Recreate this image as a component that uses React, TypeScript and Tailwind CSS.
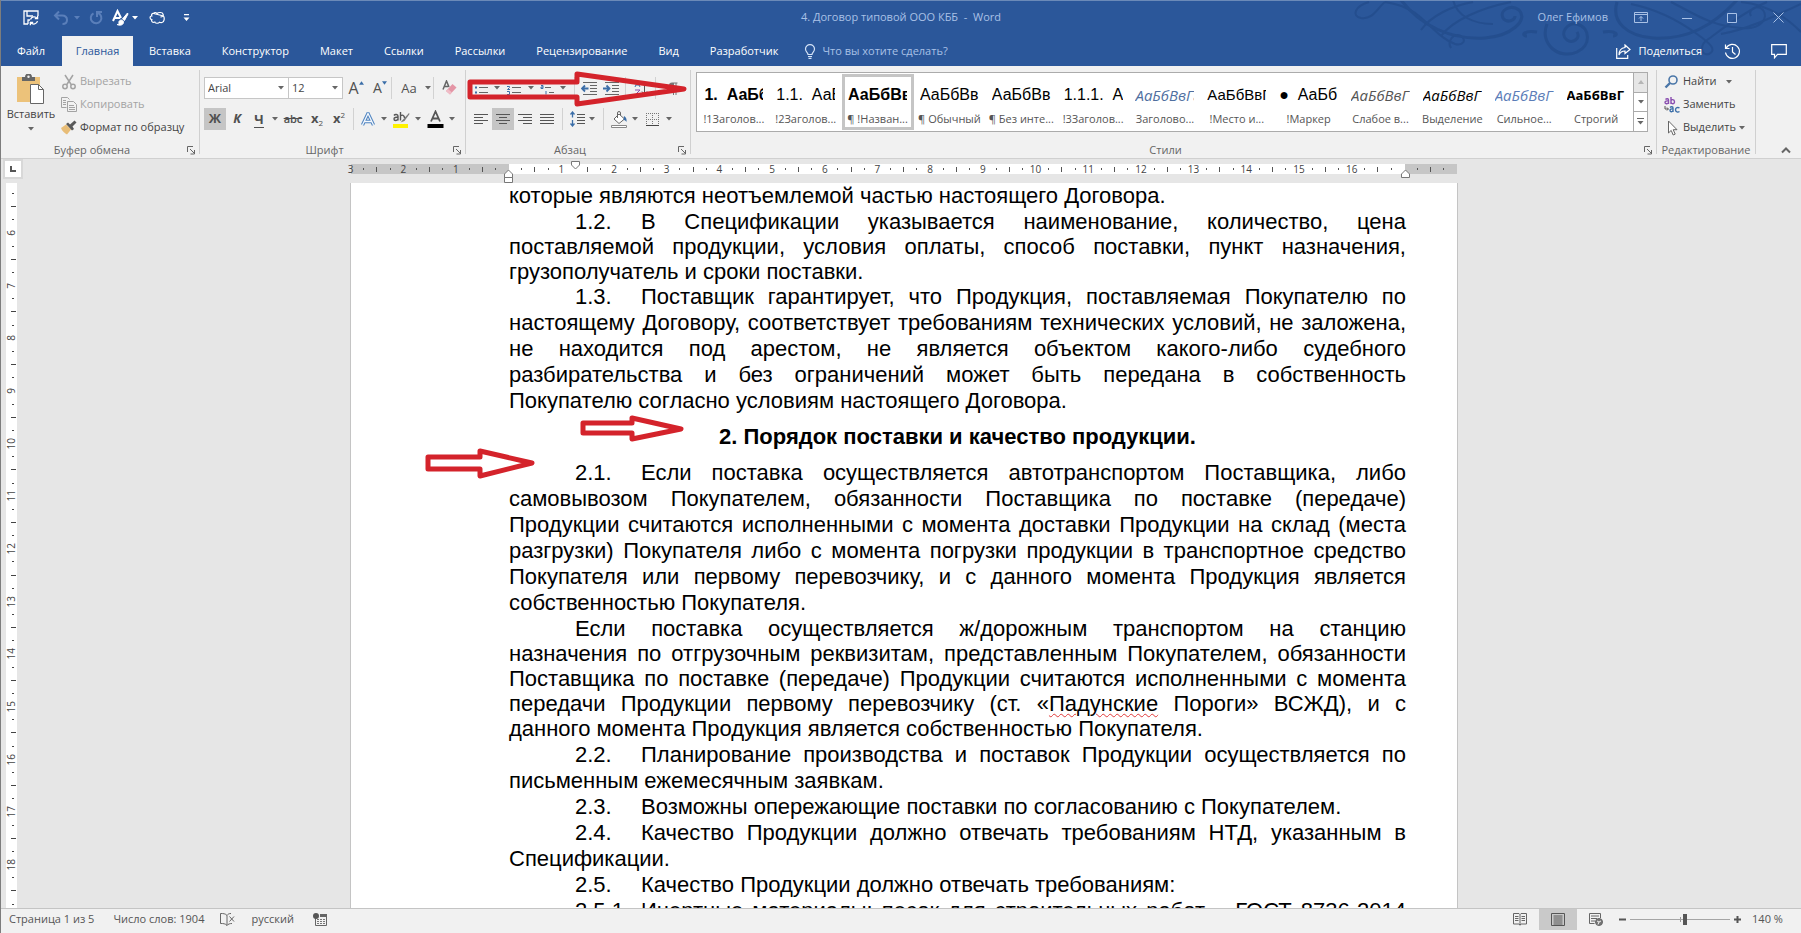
import React from "react";

type Kids = { children?: React.ReactNode };

const UI = "font-['Open_Sans','Noto_Sans',sans-serif]";

/* ---------- small shared parts ---------- */

function Caret({ className = "w-[10px]", label }: { className?: string; label: string }) {
  return (
    <button aria-label={label} className={`flex h-[22px] shrink-0 items-center justify-center text-[#666] ${className}`}>
      <svg width="6" height="4" viewBox="0 0 6 4">
        <path d="M0 0h6L3 3.6z" fill="currentColor" />
      </svg>
    </button>
  );
}

function Tool({ label, w = "w-[22px]", active = false, children }: Kids & { label: string; w?: string; active?: boolean }) {
  return (
    <button
      aria-label={label}
      className={`flex h-[22px] shrink-0 items-center justify-center text-[#505050] ${w} ${active ? "bg-[#c5c5c5]" : ""}`}
    >
      {children}
    </button>
  );
}

function Sep({ className = "" }: { className?: string }) {
  return <span className={`h-[22px] w-px shrink-0 bg-[#d2d2d2] ${className}`} />;
}

function Launcher({ label }: { label: string }) {
  return (
    <button aria-label={label} className="absolute right-[3px] bottom-[3px] text-[#666]">
      <svg width="9" height="9" viewBox="0 0 9 9" fill="none" stroke="currentColor">
        <path d="M.5 6V.5H6M3 3l4 4M7.5 4v4h-4" />
      </svg>
    </button>
  );
}

function Group({ title, className = "", launcher = true, children }: Kids & { title: string; className?: string; launcher?: boolean }) {
  return (
    <section aria-label={title} className={`relative flex flex-col ${className}`}>
      <div className="flex-1">{children}</div>
      <div className={`h-4 text-center text-[11px] leading-4 text-[#666] ${launcher ? "pr-4" : ""}`}>{title}</div>
      {launcher && <Launcher label={`Параметры: ${title}`} />}
    </section>
  );
}

function GroupLine() {
  return <span className="my-1 w-px shrink-0 bg-[#d0d0d0]" />;
}

function RedArrow({ className, w, h, points, stroke }: { className: string; w: number; h: number; points: string; stroke: number }) {
  return (
    <svg className={`pointer-events-none absolute z-20 ${className}`} width={w} height={h} viewBox={`0 0 ${w} ${h}`} aria-hidden>
      <polygon points={points} fill="none" stroke="#d4232b" strokeWidth={stroke} strokeLinejoin="round" />
    </svg>
  );
}

/* ---------- title bar ---------- */

function Swirls() {
  return (
    <svg className="pointer-events-none absolute top-0 right-0 opacity-80" width="460" height="60" viewBox="0 0 460 60" fill="none" stroke="#234c8c" strokeWidth="2" aria-hidden>
      <path d="M28 2c-14 4-18 14-8 16 12 2 16-10 24-16M44 2c10 2 22 4 34 14 14 12 24 24 36 28 8 2 12-4 6-8-8-4-14 6-10 12" />
      <path d="M60 0c20 26 50 40 84 38 26-2 44-18 34-28-8-6-20 0-16 8 4 6 12 2 12-2" strokeWidth="3" />
      <path d="M80 30c10-14 30-24 52-28M100 36C112 20 140 8 170 2M112 0c4 16 20 24 40 24" />
      <path d="M196 32c-14-2-16 4-10 4M206 24c-8 20 12 36 30 28 14-6 14-24 0-28-10-2-18 10-10 16 6 4 14-2 10-8" strokeWidth="3" />
      <path d="M262 32c14-2 16 4 10 4M276 2c-6 20 10 34 36 36 34 2 60-12 84-38" strokeWidth="3" />
      <path d="M290 4c20 4 44 14 66 30 14 10 20 16 12 20-8 2-10-8-2-14 14-10 36-28 60-38M330 2c24 12 40 24 70 26 20 2 28-10 22-18-6-6-16 0-12 6" />
      <path d="M400 2c24 2 44 14 60 30M380 34c24-4 50-16 80-30" />
    </svg>
  );
}

function QuickAccess() {
  return (
    <div className="flex items-center pl-[22px] text-white">
      <button aria-label="Сохранить" className="w-[16px]">
        <svg width="16" height="16" viewBox="0 0 16 16" fill="none" stroke="currentColor" strokeWidth="1.3">
          <path d="M5 14H1V1h14v5M4 1v5h6M5 14v-4h2" />
          <path d="M7.500 9.500A3.800 3.800 0 0 1 14 8.200M14.600 5.800v2.800h-2.800M14.500 11.200A3.800 3.800 0 0 1 8 12.800M7.400 15.200v-2.800h2.800" />
        </svg>
      </button>
      <button aria-label="Отменить" className="ml-[14px] w-[16px] text-[#5a7fba]">
        <svg width="16" height="16" viewBox="0 0 16 16" fill="none" stroke="currentColor" strokeWidth="2">
          <path d="M6 1.500 2 5.500l4 4M2.500 5.500H9c3.500 0 5 2 5 4.500S12 14 9.500 14" />
        </svg>
      </button>
      <Chevron className="ml-[5px] text-[#5a7fba]" />
      <button aria-label="Повторить" className="ml-[8px] w-[16px] text-[#5a7fba]">
        <svg width="16" height="16" viewBox="0 0 16 16" fill="none" stroke="currentColor" strokeWidth="2">
          <path d="M5.500 3.300A5.300 5.300 0 1 0 10 3M9 7V2h5" />
        </svg>
      </button>
      <button aria-label="Стили шрифта" className="ml-[7px] w-[18px]">
        <svg width="18" height="18" viewBox="0 0 18 18" fill="none" stroke="currentColor">
          <path d="M2 12 6.500 2 10 9M3.500 9H9" strokeWidth="2" />
          <path d="m16.500 4-5 6 2 1.500L17 5z" fill="currentColor" />
          <path d="M10.500 11c-2 0-3 1.500-2.500 3 .3 1-1 1.500-2 1.500 3 1.500 7 .5 6.500-3z" fill="currentColor" />
        </svg>
      </button>
      <Chevron className="ml-[3px]" />
      <button aria-label="Выделение фигуры" className="ml-[11px] w-[16px]">
        <svg width="16" height="14" viewBox="0 0 16 14" fill="none" stroke="currentColor" strokeWidth="1.200">
          <path d="M4.500 2.500C5.500 1 7.500 1.300 8 2.500c1.500-1.500 5.500-1.300 6 .5.700 2-1 3-2.500 2.800M14.500 5c1.300 2 .8 6-1.500 6.500-1.500.3-2.500-.3-2.500-.3C9.500 12.800 6 12.500 5.800 11 3.500 12 2.200 10.500 2.800 8.500.500 8.300.500 5 2.800 5 2.200 3.500 3 2.300 4.500 2.500z" />
        </svg>
      </button>
      <button aria-label="Настройка панели" className="ml-[18px]">
        <svg width="7" height="8" viewBox="0 0 7 8" fill="currentColor">
          <path d="M1 0h5v1.200H1zM.5 3.500h6l-3 3.500z" />
        </svg>
      </button>
    </div>
  );
}

function Chevron({ className = "" }: { className?: string }) {
  return (
    <svg className={`shrink-0 ${className}`} width="6" height="4" viewBox="0 0 6 4" aria-hidden>
      <path d="M0 0h6L3 3.600z" fill="currentColor" />
    </svg>
  );
}

function TitleBar() {
  return (
    <div className="relative grid h-9 grid-cols-[1fr_auto_1fr] items-center border-t border-[#6b8ab8] pb-[2px]">
      <QuickAccess />
      <h1 className="text-[11px] text-[#a9c1e6]">4. Договор типовой ООО КББ &nbsp;-&nbsp; Word</h1>
      <div className="flex items-center justify-end text-[#a9c1e6]">
        <button className="text-[11px]">Олег Ефимов</button>
        <button aria-label="Параметры ленты" className="ml-[26px] w-[14px]">
          <svg width="14" height="12" viewBox="0 0 14 12" fill="none" stroke="currentColor">
            <path d="M.5.5h13v10H.5zM.5 2.500h13M7 9V4.500M5 6.500l2-2 2 2" />
          </svg>
        </button>
        <button aria-label="Свернуть" className="ml-[34px] w-[10px]">
          <svg width="10" height="10" viewBox="0 0 10 10" stroke="currentColor"><path d="M0 5.500h10" /></svg>
        </button>
        <button aria-label="Развернуть" className="ml-[35px] w-[10px]">
          <svg width="10" height="10" viewBox="0 0 10 10" fill="none" stroke="currentColor"><path d="M.5.5h9v9h-9z" /></svg>
        </button>
        <button aria-label="Закрыть" className="mr-[17px] ml-[36px] w-[11px]">
          <svg width="11" height="11" viewBox="0 0 11 11" fill="none" stroke="currentColor"><path d="m.5.500 10 10M10.500.500l-10 10" /></svg>
        </button>
      </div>
    </div>
  );
}

const TABS = ["Вставка", "Конструктор", "Макет", "Ссылки", "Рассылки", "Рецензирование", "Вид", "Разработчик"];

function TabRow() {
  return (
    <nav className="relative flex h-[30px] items-stretch gap-px text-[11px] text-white">
      <button className="w-[60px]">Файл</button>
      <button className="w-[71px] bg-[#f1f1f1] text-[#2b579a]">Главная</button>
      {TABS.map((t) => (
        <button key={t} className="px-[15px]">{t}</button>
      ))}
      <label className="ml-[10px] flex items-center gap-[6px]">
        <svg width="12" height="15" viewBox="0 0 12 15" fill="none" stroke="#d5e3f7" strokeWidth="1.200">
          <path d="M4 10.500C4 8.500 1.500 8 1.500 5A4.300 4.300 0 0 1 6 .7 4.300 4.300 0 0 1 10.500 5C10.500 8 8 8.500 8 10.500zM4 12.500h4M4.500 14.300h3" />
        </svg>
        <input aria-label="Что вы хотите сделать?" placeholder="Что вы хотите сделать?" className="w-40 bg-transparent placeholder:text-[#a9c1e6] placeholder:opacity-100" />
      </label>
      <div className="ml-auto flex items-center">
        <button className="flex items-center gap-[8px]">
          <svg width="15" height="15" viewBox="0 0 15 15" fill="none" stroke="currentColor" strokeWidth="1.200">
            <path d="M.7 4v10.300h11V11M9 1l5 4.500-5 4V7C6 7 4 8.500 3 11c0-4 2-7 6-7.500z" />
          </svg>
          Поделиться
        </button>
        <button aria-label="Журнал" className="ml-[22px]">
          <svg width="17" height="17" viewBox="0 0 17 17" fill="none" stroke="currentColor" strokeWidth="1.200">
            <path d="M2.300 5A7 7 0 1 1 1.500 9.500M1.500 1.500V5.500h4M8.500 4v5l3 2.500" />
          </svg>
        </button>
        <button aria-label="Примечания" className="mr-[14px] ml-[30px]">
          <svg width="16" height="15" viewBox="0 0 16 15" fill="none" stroke="currentColor" strokeWidth="1.200">
            <path d="M.7.700h14.600v9.600H6.500L3.500 13.800v-3.500H.7z" />
          </svg>
        </button>
      </div>
    </nav>
  );
}

/* ---------- ribbon ---------- */

function ClipboardGroup() {
  return (
    <Group title="Буфер обмена" className="w-[198px]">
      <div className="flex pt-1">
        <button className="flex w-[60px] flex-col items-center pt-1 text-[11px] text-[#444]">
          <svg width="30" height="30" viewBox="0 0 30 30">
            <path d="M1 3h23v25H1z" fill="#ecc27a" />
            <path d="M6 7V3h3a3.500 3.500 0 0 1 7 0h3v4z" fill="#666" />
            <circle cx="12.500" cy="2.800" r="1.200" fill="#f1f1f1" />
            <path d="M14.500 10.500h8l5 5v14h-13z" fill="#fff" stroke="#666" />
            <path d="M22.500 10.500v5h5" fill="none" stroke="#666" />
          </svg>
          <span className="mt-[2px] leading-4">Вставить</span>
          <Chevron className="mt-[5px] text-[#666]" />
        </button>
        <div className="flex flex-col text-[11px]">
          <button disabled className="flex h-[23px] items-center gap-[3px] text-[#a3a3a3]">
            <svg width="16" height="16" viewBox="0 0 16 16" fill="none" stroke="currentColor" strokeWidth="1.500">
              <path d="M4 1l6.500 10M12 1 5.500 11" />
              <circle cx="4" cy="12.500" r="2.200" /><circle cx="12" cy="12.500" r="2.200" />
            </svg>
            Вырезать
          </button>
          <button disabled className="flex h-[23px] items-center gap-[3px] text-[#a3a3a3]">
            <svg width="16" height="15" viewBox="0 0 16 15" fill="none" stroke="currentColor">
              <path d="M5.500 10.500h-5V.500h6l2 2M6.500 4.500h6l3 3v7h-9zM2 3.500h3M2 5.500h3M2 7.500h3M8 8.500h5M8 10.500h6M8 12.500h6" />
            </svg>
            Копировать
          </button>
          <button className="flex h-[23px] items-center gap-[3px] text-[#444]">
            <svg width="16" height="15" viewBox="0 0 16 15">
              <path d="M0 8l5-3.500 5 5L6 14.500C4 13.500 1 11 0 8z" fill="#e8bd77" />
              <path d="m5 4 2-1.500L9 4.500 13.500.500l2 2L11.500 6.500 13 9l-2 1.500z" fill="#595959" />
            </svg>
            Формат по образцу
          </button>
        </div>
      </div>
    </Group>
  );
}

function FontGroup() {
  const field = "h-[22px] w-full appearance-none border border-[#c6c6c6] bg-white px-[3px] text-[11px] text-[#444]";
  return (
    <Group title="Шрифт" className="w-[265px]">
      <div className="flex flex-col gap-[9px] pt-[11px] pl-1">
        <div className="flex h-[22px] items-center">
          <label className="relative flex w-[85px]">
            <select aria-label="Шрифт" className={field} defaultValue="Arial"><option>Arial</option></select>
            <Chevron className="absolute top-[9px] right-[5px] text-[#666]" />
          </label>
          <label className="relative -ml-px flex w-[55px]">
            <select aria-label="Размер шрифта" className={field} defaultValue="12"><option>12</option></select>
            <Chevron className="absolute top-[9px] right-[5px] text-[#666]" />
          </label>
          <Tool label="Увеличить размер" w="w-[26px]">
            <span className="text-base leading-4">A</span>
            <svg className="mb-[10px]" width="5" height="4" viewBox="0 0 6 4"><path d="M0 4h6L3 0z" fill="#3b6ea8" /></svg>
          </Tool>
          <Tool label="Уменьшить размер" w="w-[22px]">
            <span className="text-sm leading-4">A</span>
            <svg className="mb-[10px]" width="5" height="4" viewBox="0 0 6 4"><path d="M0 0h6L3 4z" fill="#3b6ea8" /></svg>
          </Tool>
          <Sep />
          <Tool label="Регистр" w="w-[30px]"><span className="pl-[4px] text-[13px] leading-4">Aa</span></Tool>
          <Caret label="Меню регистра" className="w-[11px]" />
          <Sep />
          <Tool label="Очистить формат" w="w-[30px]">
            <svg width="15" height="16" viewBox="0 0 15 16">
              <path d="M1 9.500 4.500 1 7 7M2.500 6.500h4" fill="none" stroke="#666" strokeWidth="1.500" />
              <path d="m4 11 6.500-7 4 3.500L8 14.500z" fill="#e495a5" />
              <path d="m4 11 2-2 4 3.500-2 2z" fill="#f0bcc6" />
            </svg>
          </Tool>
        </div>
        <div className="flex items-center">
          <Tool label="Полужирный" active><b className="text-[13px]">Ж</b></Tool>
          <Tool label="Курсив"><b className="text-[13px] italic">К</b></Tool>
          <Tool label="Подчёркнутый"><b className="border-b border-current text-[13px] leading-4">Ч</b></Tool>
          <Caret label="Вид подчёркивания" />
          <Tool label="Зачёркнутый" w="w-[26px]"><b className="text-[11px] font-semibold line-through">abc</b></Tool>
          <Tool label="Подстрочный" w="w-[22px]"><b className="text-[13px]">x</b><span className="pt-[8px] text-[8px] leading-3">2</span></Tool>
          <Tool label="Надстрочный" w="w-[22px]"><b className="text-[13px]">x</b><span className="pb-[8px] text-[8px] leading-3">2</span></Tool>
          <Sep className="mx-[3px]" />
          <Tool label="Текстовые эффекты">
            <svg width="14" height="14" viewBox="0 0 14 14" fill="none">
              <path d="M1.500 13 7 1.500 12.500 13M3.500 9.500h7" stroke="#4f84c0" strokeWidth="3.400" />
              <path d="M1.500 13 7 1.500 12.500 13M3.500 9.500h7" stroke="#f4f8fd" strokeWidth="1.300" />
            </svg>
          </Tool>
          <Caret label="Виды эффектов" />
          <Tool label="Цвет выделения" w="w-[24px]">
            <svg width="18" height="18" viewBox="0 0 18 18">
              <path d="M1 14h15v4H1z" fill="#fff200" />
              <path d="M2 5.500c1-1.500 4-1.200 4 .5v4.500M6 7.500c-2-.5-4 0-4 1.500 0 2 3 2 4 0M8.500 2v8.500M8.500 6c1.500-1.500 4-1 4 2" fill="none" stroke="#555" strokeWidth="1.400" />
              <path d="m17 3-5.500 6-3 3.500 4-1.500L17.500 4z" fill="#7a7a7a" />
            </svg>
          </Tool>
          <Caret label="Палитра выделения" />
          <Tool label="Цвет текста" w="w-[24px]">
            <svg width="17" height="18" viewBox="0 0 17 18">
              <path d="M4 11.500 8.500 1.500 13 11.500M5.500 8.500h6" fill="none" stroke="#555" strokeWidth="1.800" />
              <path d="M.5 14h16v4H.5z" fill="#000" />
            </svg>
          </Tool>
          <Caret label="Палитра текста" />
        </div>
      </div>
    </Group>
  );
}

function Lines({ rows }: { rows: string }) {
  return (
    <svg width="15" height="13" viewBox="0 0 15 13" fill="none" stroke="#555"><path d={rows} /></svg>
  );
}

function ParagraphGroup() {
  return (
    <Group title="Абзац" className="w-[224px]">
      <div className="flex flex-col gap-[9px] pt-[11px] pl-1">
        <div className="flex items-center">
          <Tool label="Маркеры">
            <svg width="14" height="14" viewBox="0 0 14 14" fill="none" stroke="#666"><path d="M5 6.500h9M5 11.500h9" /><path d="M1 6.500h2M1 11.500h2" stroke="#3b6ea8" strokeWidth="2" /></svg>
          </Tool>
          <Caret label="Виды маркеров" />
          <Tool label="Нумерация" w="w-[24px]">
            <svg width="14" height="14" viewBox="0 0 14 14" fill="none" stroke="#666"><path d="M5 6.500h9M5 11.500h9" /><path d="M0 5.500h2.500v1L.5 8.500h2.500M0 10.500h2.500v3H0" stroke="#3b6ea8" /></svg>
          </Tool>
          <Caret label="Виды нумерации" />
          <Tool label="Многоуровневый список" w="w-[22px]">
            <svg width="14" height="14" viewBox="0 0 14 14" fill="none" stroke="#666"><path d="M5 6.500h6M9 11.500h5" /><path d="M1 4.500h2v3H1v-1.500h2M6 10v3.500" stroke="#3b6ea8" /></svg>
          </Tool>
          <Caret label="Виды списков" />
          <Sep className="mr-[3px] ml-[6px]" />
          <Tool label="Уменьшить отступ">
            <svg width="16" height="13" viewBox="0 0 16 13" fill="none" stroke="#666"><path d="M2 .500h14M9 3.500h7M9 6.500h7M9 9.500h7M2 12.500h14" /><path d="M7.500 6.500H1M4 3.500l-3 3 3 3" stroke="#3b6ea8" strokeWidth="1.800" /></svg>
          </Tool>
          <Tool label="Увеличить отступ">
            <svg width="16" height="13" viewBox="0 0 16 13" fill="none" stroke="#666"><path d="M2 .500h14M9 3.500h7M9 6.500h7M9 9.500h7M2 12.500h14" /><path d="M0 6.500h6.500M3.500 3.500l3 3-3 3" stroke="#3b6ea8" strokeWidth="1.800" /></svg>
          </Tool>
          <Sep className="mx-[3px]" />
          <Tool label="Сортировка" w="w-[24px]">
            <svg width="14" height="15" viewBox="0 0 14 15" fill="none"><path d="M1 6 3.500.500 6 6M2 4h3" stroke="#3b6ea8" /><path d="M1 9h5l-5 5h5" stroke="#8a4fb0" /><path d="M10.500 0v13M8 10.500l2.500 3 2.500-3" stroke="#555" /></svg>
          </Tool>
          <Sep className="mr-[6px] ml-[2px]" />
          <Tool label="Знаки абзаца">
            <svg width="10" height="13" viewBox="0 0 10 13"><path d="M9.500.500H4a3 3 0 0 0 0 6h1V13h1V1.500h1.500V13h1V1.500h1z" fill="#777" /></svg>
          </Tool>
        </div>
        <div className="flex items-center">
          <Tool label="По левому краю"><Lines rows="M0 1.500h14M0 4.500h9M0 7.500h14M0 10.500h9" /></Tool>
          <Tool label="По центру" active><Lines rows="M0 1.500h14M3 4.500h8M0 7.500h14M3 10.500h8" /></Tool>
          <Tool label="По правому краю"><Lines rows="M0 1.500h14M5 4.500h9M0 7.500h14M5 10.500h9" /></Tool>
          <Tool label="По ширине"><Lines rows="M0 1.500h14M0 4.500h14M0 7.500h14M0 10.500h14" /></Tool>
          <Sep className="mx-[4px]" />
          <Tool label="Интервал" w="w-[20px]">
            <svg width="15" height="16" viewBox="0 0 15 16" fill="none" stroke="#555"><path d="M7 3.500h8M7 6.500h8M7 9.500h8M7 12.500h8" /><path d="M2.500 1v5.500M2.500 9v6M.500 3.500l2-2.500 2 2.500M.500 12.500l2 2.500 2-2.500" stroke="#3b6ea8" strokeWidth="1.300" /></svg>
          </Tool>
          <Caret label="Виды интервалов" />
          <Sep className="mr-[4px] ml-[6px]" />
          <Tool label="Заливка">
            <svg width="17" height="17" viewBox="0 0 17 17" fill="none" stroke="#666"><path d="m3 8 5-5 5.500 5L8 12.500z" fill="#fff" /><path d="M6.500 7V2a1.500 1.500 0 0 1 3 0v2" /><path d="M13 5c2 1 3 3 2.500 6-1-1.500-2-2-3-2z" fill="#3b6ea8" stroke="none" /><path d="M.5 14.500h15v2H.5z" fill="#fff" stroke="#888" /></svg>
          </Tool>
          <Caret label="Палитра заливки" />
          <Tool label="Границы" w="w-[24px]">
            <svg width="13" height="13" viewBox="0 0 13 13" fill="none" stroke="#777"><path d="M.5 0v12M12.500 0v12M6.500 0v12M0 .500h13M0 6.500h13" strokeDasharray="1 1" /><path d="M0 12.500h13" stroke="#444" /></svg>
          </Tool>
          <Caret label="Виды границ" />
        </div>
      </div>
      <RedArrow className="top-[3px] left-0" w={224} h={40} stroke={5} points="4,13 111,13 111,5 218,20 111,35 111,28 4,28" />
    </Group>
  );
}

const ARIAL = "font-['Liberation_Sans',sans-serif] text-base";
const STYLES = [
  { sample: "1.  АаБбВв", name: "!1Заголов...", cls: `${ARIAL} font-bold text-black` },
  { sample: "1.1.  АаБбВв", name: "!2Заголов...", cls: `${ARIAL} text-black` },
  { sample: "АаБбВвГг", name: "¶ !Назван...", cls: `${ARIAL} font-bold text-black`, active: true },
  { sample: "АаБбВв", name: "¶ Обычный", cls: `${ARIAL} text-black` },
  { sample: "АаБбВв", name: "¶ Без инте...", cls: `${ARIAL} text-black` },
  { sample: "1.1.1.  АаБбВв", name: "!3Заголов...", cls: `${ARIAL} text-black` },
  { sample: "АаБбВвГг", name: "Заголово...", cls: "text-[15px] italic text-[#4f6f9f]" },
  { sample: "АаБбВвГг", name: "!Место и...", cls: "font-['Liberation_Sans',sans-serif] text-[15px] text-black" },
  { sample: "●  АаБбВв", name: "!Маркер", cls: `${ARIAL} text-black` },
  { sample: "АаБбВвГ", name: "Слабое в...", cls: "text-[15px] italic text-[#555]" },
  { sample: "АаБбВвГ", name: "Выделение", cls: "text-[15px] italic text-black" },
  { sample: "АаБбВвГ", name: "Сильное...", cls: "text-[15px] italic text-[#5b7db8]" },
  { sample: "АаБбВвГ", name: "Строгий", cls: "text-[13px] font-bold text-black" },
];

function StylesGroup() {
  return (
    <Group title="Стили" className="min-w-0 flex-1">
      <div className="mt-[6px] mr-[8px] ml-[5px] flex h-[60px] border border-[#ababab] bg-white">
        <div className="flex min-w-0 flex-1 p-px">
          {STYLES.map((s, i) => (
            <button
              key={i}
              className={`flex min-w-0 flex-1 flex-col items-center overflow-hidden border-[3px] pt-[8px] ${s.active ? "border-[#c5c5c5]" : "border-transparent"}`}
            >
              <span className="w-[59px] overflow-hidden">
                <span className={`block w-max whitespace-pre leading-5 ${s.cls}`}>{s.sample}</span>
              </span>
              <span className="mt-[6px] whitespace-nowrap text-[11px] leading-4 text-[#555]">{s.name}</span>
            </button>
          ))}
        </div>
        <div className="flex w-[14px] flex-col divide-y divide-[#ababab] border-l border-[#ababab]">
          <button aria-label="Вверх" className="flex flex-1 items-center justify-center bg-[#e6e6e6] text-[#b5b5b5]"><svg width="6" height="4" viewBox="0 0 6 4"><path d="M0 4h6L3 0z" fill="currentColor" /></svg></button>
          <button aria-label="Вниз" className="flex flex-1 items-center justify-center text-[#666]"><Chevron /></button>
          <button aria-label="Все стили" className="flex flex-1 items-center justify-center text-[#666]"><svg width="7" height="7" viewBox="0 0 7 7" fill="currentColor"><path d="M0 0h7v1H0zM.5 3h6l-3 3.500z" /></svg></button>
        </div>
      </div>
    </Group>
  );
}

function EditingGroup() {
  const row = "flex h-[23px] items-center gap-[3px] whitespace-nowrap";
  return (
    <Group title="Редактирование" className="w-[98px]" launcher={false}>
      <div className="flex flex-col pt-1 pl-[7px] text-[11px] text-[#444]">
        <button className={row}>
          <svg width="16" height="14" viewBox="0 0 16 14" fill="none" stroke="#4a76a8"><circle cx="9" cy="5" r="4" strokeWidth="1.600" /><path d="m6 8-4.500 4.500" strokeWidth="2.400" /></svg>
          Найти<Chevron className="ml-[7px] text-[#666]" />
        </button>
        <button className={row}>
          <svg width="16" height="16" viewBox="0 0 16 16" fill="none" strokeWidth="1.400"><path d="M1.500 2.500c1-1 3-1 3 .5V7M4.500 4c-2-.3-3.500.3-3.500 1.500s2.500 2 3.500 0M7 0v7M7 4c0-2 3.500-2 3.500.800S7 7 7 5" stroke="#8a4fb0" /><path d="M6 10.500c1-1 3-1 3 .5v4M9 12c-2-.3-3 .3-3 1.500s2 2 3 0M15.500 11c-1.500-1-4-.5-4 1.800s2.500 2.800 4 1.700" stroke="#3b6ea8" /><path d="M1 9v3h3M3 10.500l1.500 1.500L3 13.500" stroke="#555" strokeWidth="1" /></svg>
          Заменить
        </button>
        <button className={row}>
          <svg width="16" height="16" viewBox="0 0 16 16" fill="#fff" stroke="#666"><path d="M4.500 1v12l2.700-2.600 2 4.600 2-.9-2-4.400H13z" /></svg>
          Выделить<Chevron className="text-[#666]" />
        </button>
      </div>
    </Group>
  );
}

function Ribbon() {
  return (
    <div className="flex h-[93px] shrink-0 border-b border-[#d0d0d0] bg-[#f1f1f1]">
      <ClipboardGroup />
      <GroupLine />
      <FontGroup />
      <GroupLine />
      <ParagraphGroup />
      <GroupLine />
      <StylesGroup />
      <GroupLine />
      <EditingGroup />
      <GroupLine />
      <button aria-label="Свернуть ленту" className="flex w-[45px] items-end justify-center pb-1 pl-[14px] text-[#666]">
        <svg width="10" height="8" viewBox="0 0 10 8" fill="none" stroke="currentColor" strokeWidth="2"><path d="m1 6.500 4-4 4 4" /></svg>
      </button>
    </div>
  );
}

/* ---------- rulers ---------- */

function HorizontalRuler() {
  return (
    <div className="relative mx-auto mt-[5px] h-[19px] w-[1106px]">
      <div className="flex h-[10px]">
        <div className="w-[158px] bg-[#c6c6c6]" />
        <div className="flex-1 bg-white" />
        <div className="w-[52px] bg-[#c6c6c6]" />
      </div>
      <div className="-mt-[10px] mr-[7px] -ml-[7px] flex h-[10px] items-center text-[10px] leading-[10px] text-[#444]">
        {Array.from({ length: 84 }, (_, k) => {
          const q = Math.abs(k - 12);
          return (
            <span key={k} className="flex min-w-0 flex-1 items-center justify-center">
              {q === 0 || k === 80 || k === 17 ? null : q % 4 === 0 ? (
                <span>{q / 4}</span>
              ) : q % 4 === 2 ? (
                <i className="h-[5px] w-px bg-[#555]" />
              ) : (
                <i className="h-[2px] w-px bg-[#555]" />
              )}
            </span>
          );
        })}
      </div>
      <svg className="absolute -top-[3px] left-[220px]" width="9" height="9" viewBox="0 0 9 9" fill="#fff" stroke="#777"><path d="M.5.500h8v3.500l-4 4-4-4z" /></svg>
      <svg className="absolute top-px left-[153px]" width="9" height="18" viewBox="0 0 9 18" fill="#fff" stroke="#777"><path d="M.5 17.500v-5h8v5zM.5 12.500V9l4-4 4 4v3.500z" /></svg>
      <svg className="absolute top-[5px] left-[1050px]" width="9" height="9" viewBox="0 0 9 9" fill="#fff" stroke="#777"><path d="M.5 8.500V5l4-4 4 4v3.500z" /></svg>
    </div>
  );
}

function VerticalRuler() {
  return (
    <div className="flex w-[23px] shrink-0 flex-col pl-[5px]">
      <button aria-label="Табуляция" className="-ml-px mt-[2px] flex h-[16px] w-[16px] shrink-0 items-center justify-center bg-white text-[#555] shadow-[0_0_0_2px_#d8d8d8]">
        <svg width="6" height="6" viewBox="0 0 6 6" fill="none" stroke="currentColor" strokeWidth="2"><path d="M1 0v5h5" /></svg>
      </button>
      <div className="mt-[6px] min-h-0 w-[11px] flex-1 overflow-hidden bg-white">
        <div className="flex h-[728px] flex-col pt-1 text-[10px] leading-[11px] text-[#444]">
          {Array.from({ length: 55 }, (_, k) => (
            <span key={k} className="flex min-h-0 flex-1 items-center justify-center">
              {k % 4 === 3 ? (
                <span className="rotate-180 [writing-mode:vertical-rl]">{6 + (k - 3) / 4}</span>
              ) : k % 4 === 1 ? (
                <i className="ml-[3px] h-px w-[5px] bg-[#444]" />
              ) : (
                <i className="ml-[2px] h-px w-[2px] bg-[#444]" />
              )}
            </span>
          ))}
        </div>
      </div>
    </div>
  );
}

/* ---------- document ---------- */

function Clause({ n, leading = "leading-[26px]", className = "", children }: Kids & { n?: string; leading?: string; className?: string }) {
  return (
    <p className={`indent-[66px] ${leading} ${className}`}>
      {n && <span className="inline-block w-[66px] indent-0 text-left [text-align-last:left]">{n}</span>}
      {children}
    </p>
  );
}

function Page() {
  return (
    <article className="relative mx-auto h-full w-[1108px] overflow-hidden border-x border-[#c4c4c4] bg-white pr-[51px] pl-[158px] font-['Liberation_Sans',Arial,sans-serif] text-[22px] text-black">
      <div className="text-justify">
        <p className="leading-[26px]">которые являются неотъемлемой частью настоящего Договора.</p>
        <Clause n="1.2." leading="leading-[25px]">
          В Спецификации указывается наименование, количество, цена поставляемой продукции, условия оплаты, способ поставки, пункт назначения, грузополучатель и сроки поставки.
        </Clause>
        <Clause n="1.3.">
          Поставщик гарантирует, что Продукция, поставляемая Покупателю по настоящему Договору, соответствует требованиям технических условий, не заложена, не находится под арестом, не является объектом какого-либо судебного разбирательства и без ограничений может быть передана в собственность Покупателю согласно условиям настоящего Договора.
        </Clause>
        <h2 className="my-[10px] text-center leading-[26px] font-bold">2. Порядок поставки и качество продукции.</h2>
        <Clause n="2.1.">
          Если поставка осуществляется автотранспортом Поставщика, либо самовывозом Покупателем, обязанности Поставщика по поставке (передаче) Продукции считаются исполненными с момента доставки Продукции на склад (места разгрузки) Покупателя либо с момента погрузки продукции в транспортное средство Покупателя или первому перевозчику, и с данного момента Продукция является собственностью Покупателя.
        </Clause>
        <Clause leading="leading-[25px]">
          Если поставка осуществляется ж/дорожным транспортом на станцию назначения по отгрузочным реквизитам, представленным Покупателем, обязанности Поставщика по поставке (передаче) Продукции считаются исполненными с момента передачи Продукции первому перевозчику (ст. «<span className="underline decoration-[#e03a3a] decoration-wavy decoration-1 underline-offset-2">Падунские</span> Пороги» ВСЖД), и с данного момента Продукция является собственностью Покупателя.
        </Clause>
        <Clause n="2.2." className="pt-px">Планирование производства и поставок Продукции осуществляется по письменным ежемесячным заявкам.</Clause>
        <Clause n="2.3.">Возможны опережающие поставки по согласованию с Покупателем.</Clause>
        <Clause n="2.4.">Качество Продукции должно отвечать требованиям НТД, указанным в Спецификации.</Clause>
        <Clause n="2.5.">Качество Продукции должно отвечать требованиям:</Clause>
        <Clause n="2.5.1." className="[text-align-last:justify]">Инертные материалы: песок для строительных работ – ГОСТ 8736-2014</Clause>
      </div>
      <RedArrow className="top-[231px] left-[227px]" w={108} h={30} stroke={5} points="5,9 54,9 54,4 103,15 54,25 54,19 5,19" />
      <RedArrow className="top-[264px] left-[72px]" w={114} h={36} stroke={5} points="5,10 57,10 57,4 109,16 57,29 57,22 5,22" />
    </article>
  );
}

/* ---------- status bar ---------- */

function StatusBar() {
  return (
    <footer className="flex h-[25px] shrink-0 items-center border-t border-[#c4c4c4] bg-[#f1f1f1] pb-[3px] pl-[8px] text-[11px] text-[#555]">
      <button>Страница 1 из 5</button>
      <button className="ml-[19px]">Число слов: 1904</button>
      <button aria-label="Правописание" className="ml-[16px]">
        <svg width="15" height="13" viewBox="0 0 15 13" fill="none" stroke="#666"><path d="M7 2.500C5.500.500 3 .500.500.500v10c2.500 0 5 0 6.500 2 1-1.500 3-2 5-2M7 2.500v10M7 2.500C8 1 9 .500 11 .500M9.500 3.500l4.500 5M14 3.500l-4.500 5" /></svg>
      </button>
      <button className="ml-[16px]">русский</button>
      <button aria-label="Макросы" className="ml-[19px]">
        <svg width="14" height="13" viewBox="0 0 14 13"><path d="M2.500 5v7.500h11V1.500H7" fill="none" stroke="#666" /><path d="M7 1h7v3H7z" fill="#666" /><circle cx="3" cy="3" r="3" fill="#555" /><path d="M4 6.500h8M4 8.500h8M4 10.500h8" stroke="#777" strokeDasharray="2 1" /></svg>
      </button>
      <div className="ml-auto flex h-full items-center">
        <button aria-label="Режим чтения" className="flex w-[38px] justify-center">
          <svg width="14" height="13" viewBox="0 0 14 13" fill="none" stroke="#666"><path d="M.5.500h5.500l1 1 1-1h5.500v10.500H8l-1 1-1-1H.500zM7 1.500v11M2 3.500h3.500M2 5.500h3.500M2 7.500h3.500M8.500 3.500H12M8.500 5.500H12M8.500 7.500H12" /></svg>
        </button>
        <button aria-label="Разметка страницы" className="flex h-full w-[38px] items-center justify-center bg-[#c9c9c9]">
          <svg width="14" height="13" viewBox="0 0 14 13" fill="none" stroke="#555"><path d="M.5.500h13v12H.500zM2.500 3h9M2.500 5h9M2.500 7h9M2.500 9h9M2.500 11h9" /></svg>
        </button>
        <button aria-label="Веб-документ" className="flex w-[38px] justify-center">
          <svg width="14" height="13" viewBox="0 0 14 13" fill="none" stroke="#666"><path d="M5.500 10.500h-5V.500h11V5M2 3h8M2 5.500h6M2 8h4" /><circle cx="10" cy="9" r="3.500" fill="#777" /><path d="M8 8l2 1 2-1M9 11.500 10 9" stroke="#f1f1f1" /></svg>
        </button>
        <button aria-label="Уменьшить" className="ml-[4px] w-[7px]"><svg width="7" height="7" viewBox="0 0 7 7"><path d="M0 2.500h7v2H0z" fill="#555" /></svg></button>
        <span className="relative ml-[4px] flex h-4 w-[100px] items-center">
          <i className="absolute left-[50px] h-[5px] w-px bg-[#999]" />
          <input
            type="range"
            aria-label="Масштаб"
            min={0}
            max={100}
            defaultValue={55}
            className="relative h-px w-full appearance-none bg-[#a5a5a5] [&::-webkit-slider-thumb]:h-[11px] [&::-webkit-slider-thumb]:w-[4px] [&::-webkit-slider-thumb]:appearance-none [&::-webkit-slider-thumb]:bg-[#555]"
          />
        </span>
        <button aria-label="Увеличить" className="ml-[4px] w-[7px]"><svg width="7" height="7" viewBox="0 0 7 7"><path d="M0 2.500h7v2H0zM2.500 0h2v7h-2z" fill="#555" /></svg></button>
        <button className="mr-[18px] ml-[11px] w-[31px] whitespace-nowrap">140 %</button>
      </div>
    </footer>
  );
}

export default function App() {
  return (
    <div className={`flex h-screen min-h-96 flex-col overflow-hidden border-l border-[#7d7d7d] bg-[#e6e6e6] ${UI}`}>
      <header className="relative shrink-0 bg-[#2b579a]">
        <Swirls />
        <TitleBar />
        <TabRow />
      </header>
      <Ribbon />
      <main className="flex min-h-0 flex-1">
        <VerticalRuler />
        <div className="flex min-w-0 flex-1 flex-col pr-[17px]">
          <HorizontalRuler />
          <div className="min-h-0 flex-1">
            <Page />
          </div>
        </div>
      </main>
      <StatusBar />
    </div>
  );
}
